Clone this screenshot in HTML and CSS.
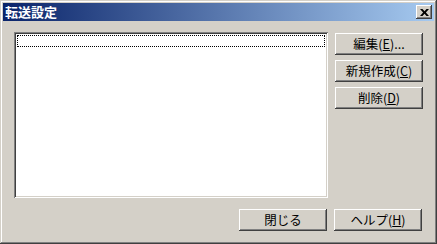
FILE: index.html
```html
<!DOCTYPE html>
<html lang="ja">
<head>
  <meta charset="UTF-8" />
  <title>転送設定</title>
  <link rel="stylesheet" href="styles.css">
</head>
<body>
  <div class="window">
    <div class="titlebar">
      <span class="title">転送設定</span>
      <button class="close_btn">
        <svg width="9" height="7" viewBox="0 0 9 7">
          <path d="M0 0h2.5l2 2.2 2-2.2H9L5.9 3.5 9 7H6.5l-2-2.2-2 2.2H0l3.1-3.5z" fill="#000"/>
        </svg>
      </button>
    </div>
    <div class="content">
      <div class="main">
        <div class="list">
          <div class="list_item"></div>
        </div>
        <div class="side">
          <button class="win_btn">編集(<u>E</u>)...</button>
          <button class="win_btn">新規作成(<u>C</u>)</button>
          <button class="win_btn">削除(<u>D</u>)</button>
        </div>
      </div>
      <div class="footer">
        <button class="win_btn">閉じる</button>
        <button class="win_btn">ヘルプ(<u>H</u>)</button>
      </div>
    </div>
  </div>
</body>
</html>
```

FILE: styles.css
```css
body {
  margin: 0;
  background: #d4d0c8;
  font-family: "Noto Sans CJK JP", "Liberation Sans", sans-serif;
  font-size: 12px;
}
.window {
  width: 437px;
  height: 244px;
  box-sizing: border-box;
  padding: 3px;
  background: #d4d0c8;
  box-shadow: inset -1px -1px #404040, inset 1px 1px #d4d0c8,
              inset -2px -2px #808080, inset 2px 2px #ffffff;
}
.titlebar {
  height: 18px;
  display: flex;
  align-items: center;
  justify-content: space-between;
  padding: 0 2px 0 2px;
  background: linear-gradient(to right, #0a246a, #a6caf0);
}
.title {
  color: #fff;
  font-weight: bold;
  font-size: 13px;
  line-height: 18px;
}
.close_btn {
  width: 16px;
  height: 14px;
  padding: 0;
  border: none;
  background: #d4d0c8;
  display: flex;
  align-items: center;
  justify-content: center;
  box-shadow: inset -1px -1px #404040, inset 1px 1px #ffffff,
              inset -2px -2px #808080;
}
.content {
  padding: 11px 11px 0 11px;
}
.main {
  display: flex;
  gap: 7px;
}
.list {
  width: 314px;
  height: 166px;
  box-sizing: border-box;
  padding: 3px;
  background: #fff;
  box-shadow: inset 1px 1px #808080, inset -1px -1px #ffffff,
              inset 2px 2px #404040, inset -2px -2px #d4d0c8;
}
.list_item {
  height: 12px;
  outline: 1px dotted #000;
  outline-offset: -1px;
}
.side {
  display: flex;
  flex-direction: column;
  gap: 5px;
  padding-top: 1px;
}
.win_btn {
  width: 88px;
  height: 22px;
  padding: 0;
  border: none;
  background: #d4d0c8;
  font-family: "Noto Sans CJK JP", "Liberation Sans", sans-serif;
  font-size: 12.5px;
  color: #000;
  line-height: 22px;
  box-shadow: inset -1px -1px #404040, inset 1px 1px #ffffff,
              inset -2px -2px #808080, inset 2px 2px #d4d0c8;
}
.footer {
  display: flex;
  justify-content: flex-end;
  gap: 7px;
  margin-top: 11px;
  padding-right: 1px;
}
```
